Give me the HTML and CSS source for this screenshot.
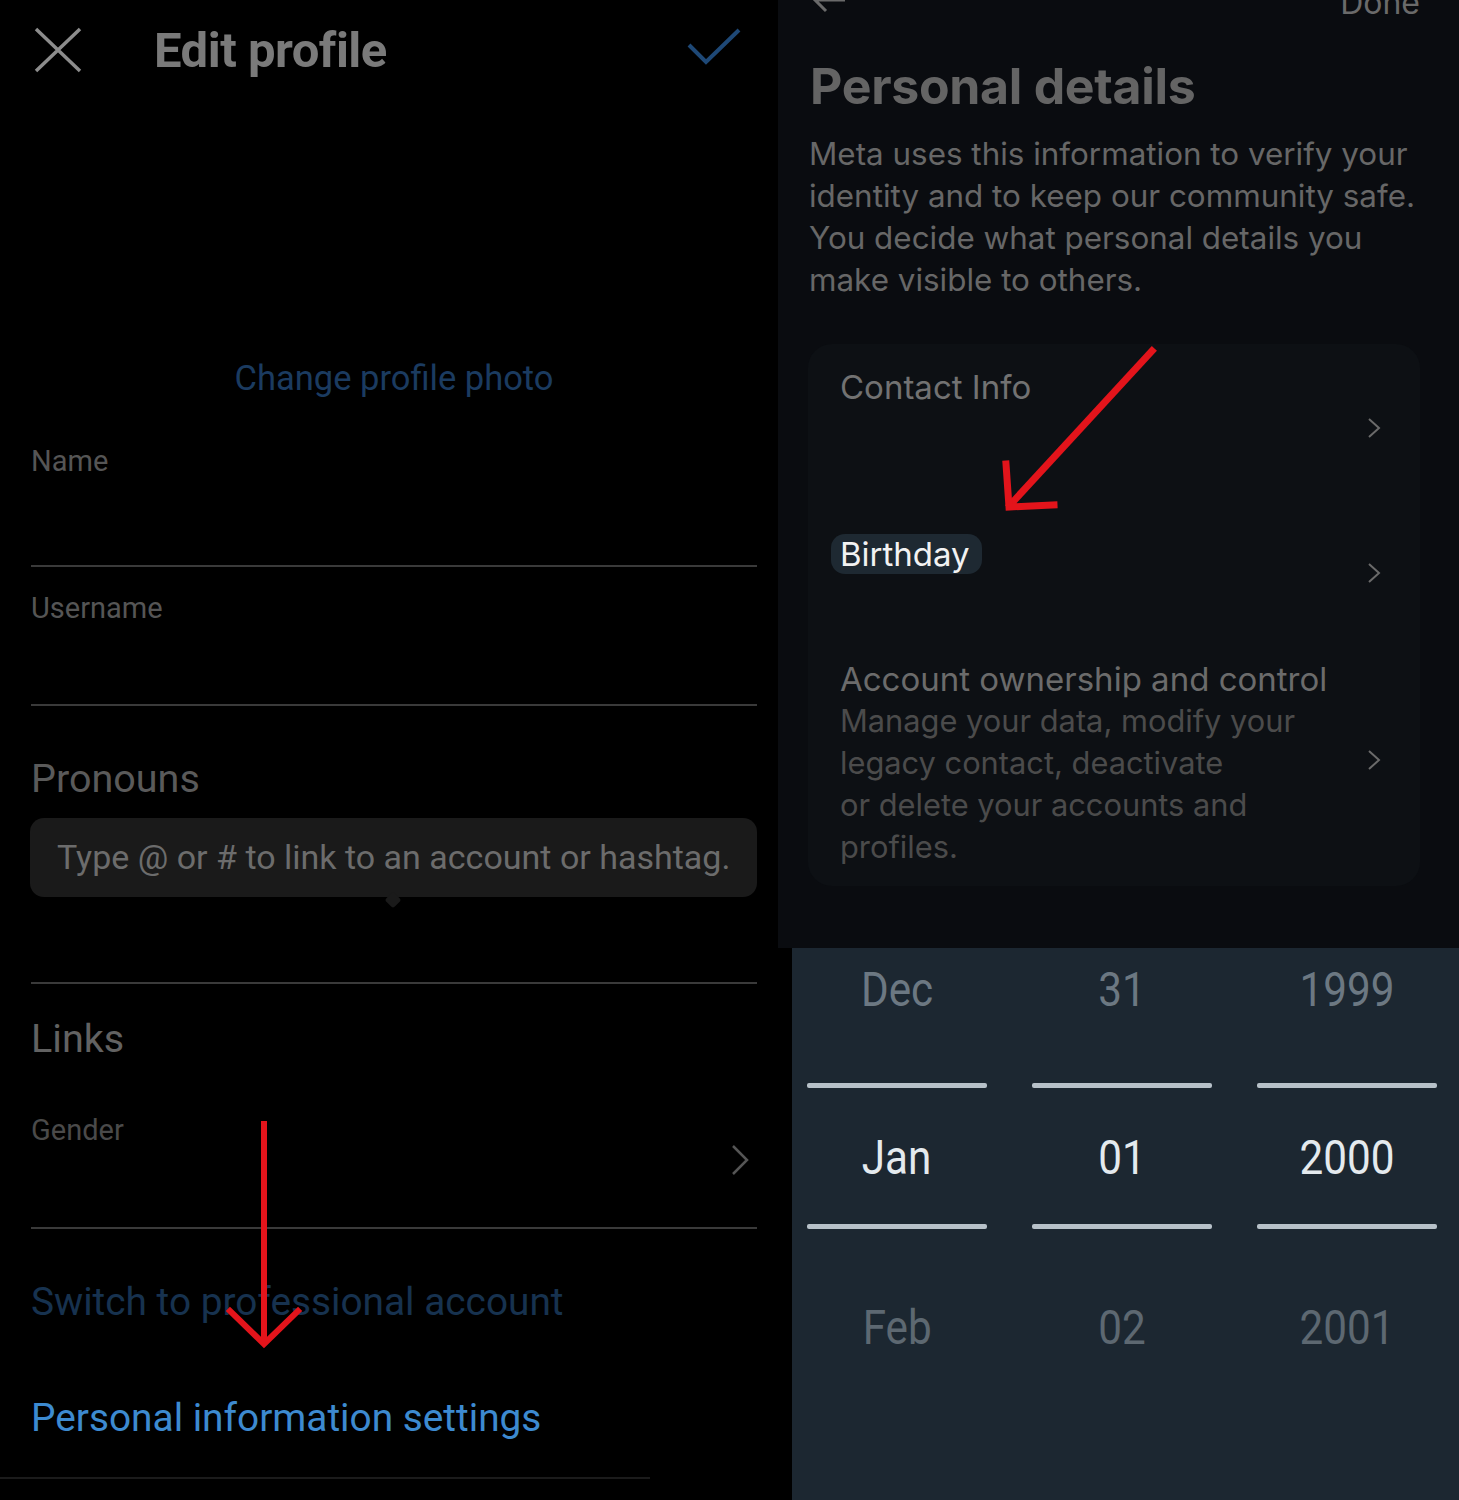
FILE: index.html
```html
<!DOCTYPE html>
<html lang="en">
<head>
  <meta charset="UTF-8">
  <meta name="viewport" content="width=device-width, initial-scale=1.0">
  <title>Edit profile - Personal details</title>
  <link rel="stylesheet" href="styles.css">
</head>
<body>
  <div class="page">
    <!-- left: edit profile screen -->
    <section class="edit-profile">
      <header class="ep-header">
        <svg class="icon-close" width="48" height="46" viewBox="0 0 48 46">
          <path d="M2 2 L46 44 M46 2 L2 44" stroke="#8c8c8c" stroke-width="3.5" fill="none"/>
        </svg>
        <h1 class="ep-title">Edit profile</h1>
        <svg class="icon-check" width="54" height="38" viewBox="0 0 54 38">
          <path d="M2 17 L19 34 L52 2" stroke="#1e4876" stroke-width="4" fill="none"/>
        </svg>
      </header>

      <div class="photo-link">Change profile photo</div>

      <div class="field field-name">
        <div class="field-label">Name</div>
      </div>
      <div class="field field-username">
        <div class="field-label">Username</div>
      </div>

      <div class="field field-pronouns">
        <div class="field-label big">Pronouns</div>
        <div class="tooltip">Type @ or # to link to an account or hashtag.</div>
      </div>

      <div class="section-title">Links</div>

      <div class="field field-gender">
        <div class="field-label">Gender</div>
        <svg class="chevron-left" width="18" height="32" viewBox="0 0 18 32">
          <path d="M2 2 L16 16 L2 30" stroke="#555" stroke-width="2.5" fill="none"/>
        </svg>
      </div>

      <div class="action-link muted">Switch to professional account</div>
      <div class="action-link">Personal information settings</div>
      <div class="bottom-rule"></div>
    </section>

    <!-- right: personal details + birthday picker -->
    <div class="right-col">
      <section class="details">
        <div class="details-top">
          <svg class="icon-back" width="36" height="28" viewBox="0 0 36 28">
            <path d="M34 14 L4 14 M15 3 L4 14 L15 25" stroke="#6a6a6a" stroke-width="3" fill="none"/>
          </svg>
          <span class="done">Done</span>
        </div>
        <h2 class="details-title">Personal details</h2>
        <p class="details-desc">Meta uses this information to verify your identity and to keep our community safe. You decide what personal details you make visible to others.</p>

        <div class="card">
          <div class="card-row row-contact">
            <div class="row-text"><div class="row-title">Contact Info</div></div>
            <svg class="chevron" width="14" height="22" viewBox="0 0 14 22">
              <path d="M2 2 L12 11 L2 20" stroke="#6a6a6a" stroke-width="2" fill="none"/>
            </svg>
          </div>
          <div class="card-row row-birthday">
            <div class="row-text"><div class="row-title"><span class="highlight">Birthday</span></div></div>
            <svg class="chevron" width="14" height="22" viewBox="0 0 14 22">
              <path d="M2 2 L12 11 L2 20" stroke="#6a6a6a" stroke-width="2" fill="none"/>
            </svg>
          </div>
          <div class="card-row row-account">
            <div class="row-text">
              <div class="row-title dim">Account ownership and control</div>
              <div class="row-desc">Manage your data, modify your<br>legacy contact, deactivate<br>or delete your accounts and<br>profiles.</div>
            </div>
            <svg class="chevron" width="14" height="22" viewBox="0 0 14 22">
              <path d="M2 2 L12 11 L2 20" stroke="#6a6a6a" stroke-width="2" fill="none"/>
            </svg>
          </div>
        </div>
      </section>

      <section class="picker">
        <div class="picker-col">
          <span class="p-item faded">Dec</span>
          <span class="p-line"></span>
          <span class="p-item current">Jan</span>
          <span class="p-line"></span>
          <span class="p-item next">Feb</span>
        </div>
        <div class="picker-col">
          <span class="p-item faded">31</span>
          <span class="p-line"></span>
          <span class="p-item current">01</span>
          <span class="p-line"></span>
          <span class="p-item next">02</span>
        </div>
        <div class="picker-col">
          <span class="p-item faded">1999</span>
          <span class="p-line"></span>
          <span class="p-item current">2000</span>
          <span class="p-line"></span>
          <span class="p-item next">2001</span>
        </div>
      </section>
    </div>

    <!-- red annotation arrows drawn on top -->
    <svg class="annotations" width="1459" height="1500" viewBox="0 0 1459 1500">
      <g stroke="#e3141b" stroke-width="6" fill="none" stroke-linecap="square">
        <path d="M264 1124 L264 1342"/>
        <path d="M230 1311 L264 1344 L298 1311"/>
        <path d="M1152 351 L1010 505" stroke-width="7"/>
        <path d="M1006 464 L1009 507 L1054 505" stroke-width="7"/>
      </g>
    </svg>
  </div>
</body>
</html>
```

FILE: styles.css
```css
body {
  margin: 0;
  background-color: #000;
  font-family: Roboto, "Liberation Sans", sans-serif;
}

.page {
  position: relative;
  display: flex;
  width: 1459px;
  height: 1500px;
  overflow: hidden;
}

/* ---------- left panel ---------- */

.edit-profile {
  width: 778px;
  flex-shrink: 0;
  box-sizing: border-box;
  padding: 0 21px 0 31px;
  background-color: #000;
}

.ep-header {
  display: flex;
  align-items: center;
  height: 100px;
}

.icon-close {
  margin-left: 3px;
}

.ep-title {
  margin: 0 0 0 72px;
  font-size: 49px;
  font-weight: 700;
  color: #7a7a7a;
  letter-spacing: -0.5px;
}

.icon-check {
  margin-left: auto;
  margin-right: 16px;
  margin-top: -6px;
}

.photo-link {
  margin-top: 258px;
  text-align: center;
  line-height: 40px;
  font-size: 34.5px;
  color: #1b3b60;
}

.field {
  border-bottom: 2px solid #3a3a3a;
}

.field-label {
  line-height: 32px;
  font-size: 29px;
  color: #555;
}

.field-label.big {
  line-height: 44px;
  font-size: 39.5px;
  color: #5a5a5a;
}

.field-name {
  margin-top: 47px;
  height: 120px;
}

.field-username {
  margin-top: 25px;
  height: 112px;
}

.field-pronouns {
  margin-top: 51px;
  height: 225px;
}

.tooltip {
  position: relative;
  margin: 17px 0 0 -1px;
  height: 79px;
  line-height: 79px;
  padding-left: 27px;
  border-radius: 14px;
  background-color: #1a1a1a;
  font-size: 34px;
  color: #6c6c6c;
}

.tooltip::after {
  content: "";
  position: absolute;
  left: 357px;
  bottom: -9px;
  width: 12px;
  height: 12px;
  background-color: #1a1a1a;
  border-radius: 3px;
  transform: rotate(45deg);
}

.section-title {
  margin-top: 33px;
  line-height: 44px;
  font-size: 39.5px;
  color: #626262;
}

.field-gender {
  position: relative;
  margin-top: 53px;
  height: 113px;
}

.field-gender .field-label {
  color: #4a4a4a;
}

.chevron-left {
  position: absolute;
  right: 8px;
  top: 30px;
}

.action-link {
  line-height: 44px;
  font-size: 38.8px;
  color: #3d8ad0;
  margin-top: 72px;
}

.action-link.muted {
  margin-top: 51px;
  color: #17324f;
}

.bottom-rule {
  margin: 37px 0 0 -31px;
  width: 650px;
  height: 2px;
  background-color: #1b1b1b;
}

/* ---------- right column ---------- */

.right-col {
  flex: 1;
  display: flex;
  flex-direction: column;
}

.details {
  height: 948px;
  box-sizing: border-box;
  padding: 0 39px 0 30px;
  background-color: #0a0c10;
  font-family: Inter, "Noto Sans", sans-serif;
}

.details-top {
  display: flex;
  align-items: center;
  justify-content: space-between;
  height: 28px;
  margin-top: -14px;
}

.icon-back {
  margin-left: 3px;
}

.done {
  font-size: 32px;
  color: #6a6a6a;
  margin-top: 4px;
}

.details-title {
  margin: 44px 0 0 2px;
  line-height: 56px;
  font-size: 50px;
  font-weight: 700;
  color: #646464;
  letter-spacing: -0.3px;
}

.details-desc {
  margin: 19px 0 0 1px;
  line-height: 42px;
  font-size: 31.4px;
  color: #676767;
}

.card {
  margin-top: 43px;
  height: 542px;
  display: flex;
  flex-direction: column;
  background-color: #0d1014;
  border-radius: 24px;
}

.card-row {
  display: flex;
  align-items: center;
  justify-content: space-between;
  padding: 0 39px 0 32px;
}

.row-text {
  align-self: flex-start;
}

.row-title {
  line-height: 42px;
  font-size: 33px;
  color: #727272;
}

.row-title.dim {
  color: #6b6b6b;
}

.row-desc {
  line-height: 42px;
  font-size: 30.8px;
  color: #4b4b4b;
}

.row-contact {
  height: 168px;
}

.row-contact .row-text {
  padding-top: 22px;
}

.row-birthday {
  height: 122px;
}

.row-birthday .row-text {
  padding-top: 21px;
}

.highlight {
  display: inline-block;
  margin-left: -9px;
  padding: 0 12px 0 9px;
  line-height: 40px;
  border-radius: 14px;
  background-color: #1e2932;
  color: #f2f2f2;
}

.row-account {
  flex: 1;
}

.row-account .row-text {
  padding-top: 24px;
}

/* ---------- birthday picker ---------- */

.picker {
  flex: 1;
  margin-left: 14px;
  padding: 0 22px 0 15px;
  display: grid;
  grid-template-columns: repeat(3, 180px);
  column-gap: 45px;
  background-color: #1c2731;
}

.picker-col {
  display: flex;
  flex-direction: column;
  align-items: center;
}

.p-item {
  line-height: 60px;
  font-size: 48px;
  transform: scaleX(0.88);
}

.p-item.faded {
  margin-top: 12px;
  color: #6c7882;
}

.p-item.current {
  margin-top: 40px;
  color: #e4eaee;
}

.p-item.next {
  margin-top: 69px;
  color: #5d6871;
}

.p-line {
  display: block;
  width: 180px;
  height: 5px;
  margin-top: 63px;
  background-color: #b7c1c9;
  border-radius: 2px;
}

.p-line + .p-item + .p-line {
  margin-top: 36px;
}

/* ---------- annotations ---------- */

.annotations {
  position: absolute;
  left: 0;
  top: 0;
  pointer-events: none;
}
```
